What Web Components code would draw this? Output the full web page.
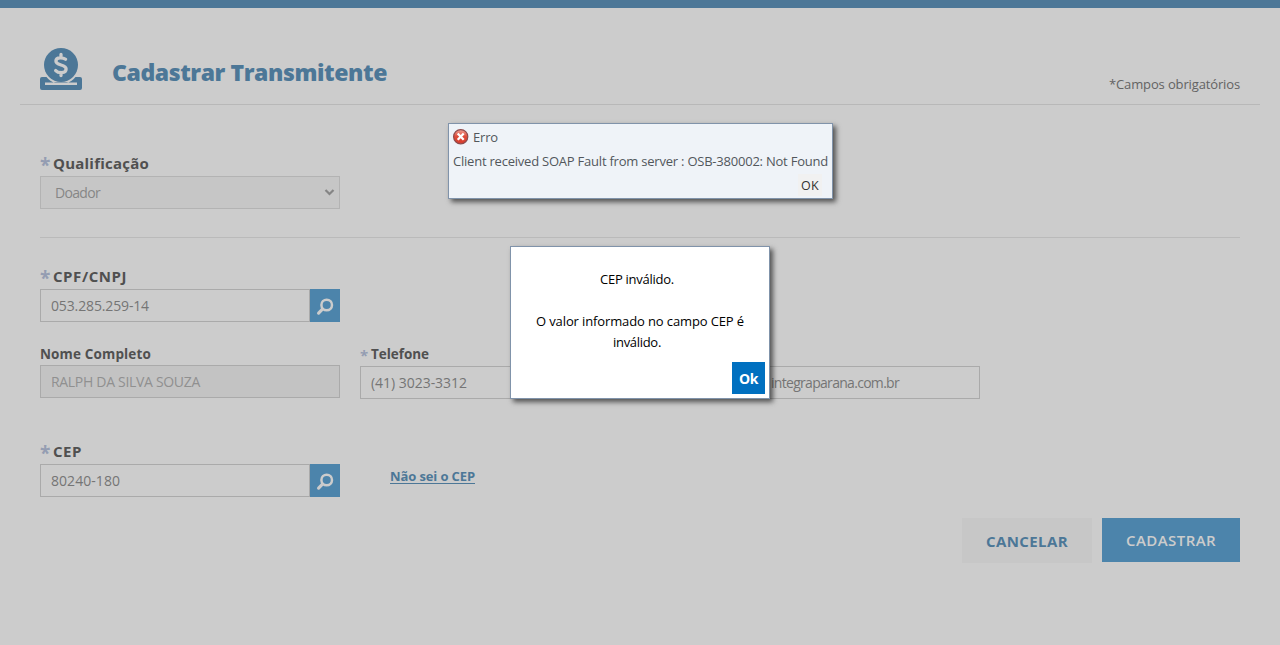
<!DOCTYPE html>
<html lang="pt-BR">
<head>
<meta charset="utf-8">
<title>Cadastrar Transmitente</title>
<style>
html,body{margin:0;height:645px;overflow:hidden;background:#ccc;font-family:"Open Sans","Noto Sans",sans-serif;color:#555}
</style>
</head>
<body>
<donor-page></donor-page>
<script>
const define=(name,html,setup)=>{
  const t=document.createElement('template');t.innerHTML=html;
  customElements.define(name,class extends HTMLElement{
    constructor(){super();this.attachShadow({mode:'open'}).append(t.content.cloneNode(true));}
    connectedCallback(){if(setup)setup(this,this.shadowRoot);}
  });
};

/* Single line of text tracked to a given width */
define('fit-text',`<style>:host{display:inline-block;white-space:pre}span{display:inline-block}</style><span><slot></slot></span>`,(el,root)=>{
  const s=root.querySelector('span'),w=+el.getAttribute('w');
  s.style.letterSpacing='0';
  const n=el.textContent.length,gap=(w-s.getBoundingClientRect().width)/n;
  s.style.letterSpacing=gap+'px';
});

define('donation-icon',`<style>:host{display:block;width:42px;height:42px}svg{display:block}</style>
<svg width="42" height="42" viewBox="0 0 42 42"><path fill="#4c7797" fill-rule="evenodd" d="M2 29h4.500Q10 33.500 15 35h12Q32 33.500 35.500 29H40q2 0 2 2v9q0 2-2 2H2q-2 0-2-2v-9q0-2 2-2zM5 34.600v2.400h32v-2.400z"/><circle cx="21" cy="17" r="17" fill="#4c7797"/><path fill="none" stroke="#ccc" stroke-width="3.300" stroke-linecap="round" stroke-linejoin="round" d="M21 6.500v3M21 24.500v3M25.600 11.300C23.500 9.600 16 8.400 15.900 13c0 5 10.200 3 10.200 8 0 4.900-7.900 4.400-10.400 1.600"/></svg>`);

define('search-button',`<style>:host{display:flex;width:30px;height:33px;background:#4c84ab;flex:none}svg{display:block}</style>
<svg width="30" height="33" viewBox="0 0 30 33"><circle cx="16.700" cy="16" r="5.300" fill="none" stroke="#ccc" stroke-width="2.500"/><path d="M12.500 20.200L8.600 24.100" stroke="#ccc" stroke-width="3.200" stroke-linecap="round"/></svg>`);

define('error-icon',`<style>:host{display:block;width:16px;height:16px}svg{display:block}</style>
<svg width="16" height="16" viewBox="0 0 16 16"><defs><linearGradient id="g" x2="0" y2="1"><stop stop-color="#f0a195"/><stop offset=".5" stop-color="#df4a38"/><stop offset="1" stop-color="#d73c2c"/></linearGradient></defs><circle cx="7.700" cy="7.700" r="7.100" fill="url(#g)" stroke="#8e4a4b" stroke-width="1.200"/><path d="M4.700 4.500l6 6.200M10.700 4.500l-6 6.200" stroke="#fff" stroke-width="2.300"/></svg>`);

define('required-mark',`<style>:host{display:block}svg{display:block}</style><svg width="9" height="22" viewBox="0 0 9 22"><path d="M4.500 7.500V11M.9 10l3.600 1 3.600-1M2.300 14.500L4.500 11l2.200 3.500" fill="none" stroke="#949db2" stroke-width="2"/></svg>`);

define('form-field',`<style>
:host{display:block;width:300px}
.label{height:24px;line-height:var(--lh,22px);display:flex;font-weight:700;font-size:var(--ls,15px);color:#505050}
.star{width:var(--star,13px);font-size:var(--star-size,19px);color:#949db2;display:none;flex:none;padding-top:var(--star-y,2px);box-sizing:border-box}
:host([required]) .star{display:block}
.row{display:flex}
.box{box-sizing:border-box;height:33px;flex:1;border:1px solid #aaa;padding-left:var(--pad,10px);font-size:14px;line-height:31px;color:#757575;display:flex}
:host([disabled]) .box{background:#c3c3c3;color:#909090}
:host([kind=select]) .box{background:#c6c6c6;border-color:#b3b3b3;color:#868686;line-height:32px}
</style><div class="label"><span class="star">*</span><slot name="label"></slot></div><div class="row"><div class="box"><slot></slot></div><slot name="button"></slot></div>`);

define('select-arrow',`<style>:host{display:block;margin-left:auto;padding:11px 4px 0 0;line-height:0}</style><svg width="11" height="9" viewBox="0 0 11 9"><path d="M1.500 2l4 4 4-4" fill="none" stroke="#858585" stroke-width="2.200"/></svg>`);

define('error-dialog',`<style>
:host{box-sizing:border-box;position:absolute;left:448px;top:123px;width:385px;height:76px;border:1px solid #8093aa;background:#eff3f8;box-shadow:3px 3px 5px rgba(0,0,0,.6);font-size:13px;color:#52575c}
.head{display:flex;height:26px;line-height:26px;padding-left:4px;gap:4px}
error-icon{margin-top:5px}
.msg{padding-left:4px;height:22px;line-height:22px}
.foot{display:flex;justify-content:flex-end;padding:2px 10px 0 0}
.ok{height:22px;line-height:23px;width:24px;background:#f1f1f1;color:#333;text-align:center;font-size:12.500px}
</style><div class="head"><error-icon></error-icon><fit-text w="25">Erro</fit-text></div>
<div class="msg"><fit-text w="375">Client received SOAP Fault from server : OSB-380002: Not Found</fit-text></div>
<div class="foot"><div class="ok"><fit-text w="18">OK</fit-text></div></div>`);

define('cep-dialog',`<style>
:host{box-sizing:border-box;position:absolute;left:510px;top:246px;width:260px;height:153px;border:1px solid #8093aa;background:#fff;box-shadow:3px 3px 5px rgba(0,0,0,.6);font-size:13px;line-height:21px;color:#000;padding-top:22px;text-align:center}
.p{height:21px}.gap{margin-bottom:21px}.l{padding-right:6px}
.foot{display:flex;justify-content:flex-end;padding:9px 4px 0}
.ok{width:33px;height:32px;line-height:33px;background:#0070c0;color:#fff;font-weight:700;font-size:14px}
</style><div class="p gap l"><fit-text w="74">CEP inválido.</fit-text></div>
<div class="p"><fit-text w="208">O valor informado no campo CEP é</fit-text></div><div class="p l"><fit-text w="48">inválido.</fit-text></div>
<div class="foot"><div class="ok"><fit-text w="19">Ok</fit-text></div></div>`);

define('donor-page',`<style>
:host{display:block;position:relative;width:1280px;height:645px;overflow:hidden;background:#ccc}
.bar{height:8px;background:#4c7797}
header{box-sizing:border-box;margin:0 20px;height:97px;border-bottom:1px solid #b8b8b8;padding:40px 20px 0;display:flex}
h1{margin:7px 0 0 30px;font-size:23px;line-height:34px;font-weight:800;color:#4c7797}
.req{margin:25px 0 0 auto;font-size:13px;line-height:22px;color:#636363}
main{padding:0 40px}
.q{padding-top:47px;height:85px;border-bottom:1px solid #bababa}
.cpf{padding-top:27px;height:57px}
.trio{display:flex;gap:20px;padding-top:19px;height:80px}
.trio form-field{--lh:26px;--ls:13.500px;--star:11px;--star-size:15px;--star-y:1px}
.trio form-field+form-field{--lh:24px;padding-top:1px}
.cep{display:flex;gap:50px;margin-top:19px}
.link{margin-top:26px;font-size:13px;line-height:20px;font-weight:700;color:#4c7797;height:17px;border-bottom:1px solid #4c7797}
.actions{display:flex;justify-content:flex-end;gap:10px;margin-top:21px;font-size:15px}
.btn{height:44px;line-height:45px;text-align:center;font-weight:600}
.cancel{width:130px;height:45px;line-height:47px;background:#c7c7c7;color:#4c7797;font-weight:700}
.save{width:138px;background:#4c84ab;color:#ccc}
</style>
<div class="bar"></div>
<header><donation-icon></donation-icon><h1><fit-text w="275">Cadastrar Transmitente</fit-text></h1><div class="req"><fit-text w="131">*Campos obrigatórios</fit-text></div></header>
<main>
<div class="q"><form-field required kind="select" style="--pad:14px"><fit-text slot="label" w="96">Qualificação</fit-text><fit-text w="45">Doador</fit-text><select-arrow></select-arrow></form-field></div>
<div class="cpf"><form-field required><fit-text slot="label" w="74">CPF/CNPJ</fit-text><fit-text w="98">053.285.259-14</fit-text><search-button slot="button"></search-button></form-field></div>
<div class="trio">
<form-field disabled><fit-text slot="label" w="111">Nome Completo</fit-text><fit-text w="149">RALPH DA SILVA SOUZA</fit-text></form-field>
<form-field required><fit-text slot="label" w="58">Telefone</fit-text><fit-text w="96">(41) 3023-3312</fit-text></form-field>
<form-field style="--pad:90px"><fit-text w="128">integraparana.com.br</fit-text></form-field>
</div>
<div class="cep"><form-field required><fit-text slot="label" w="29">CEP</fit-text><fit-text w="69">80240-180</fit-text><search-button slot="button"></search-button></form-field><div class="link"><fit-text w="85">Não sei o CEP</fit-text></div></div>
<div class="actions"><div class="btn cancel"><fit-text w="82">CANCELAR</fit-text></div><div class="btn save"><fit-text w="90">CADASTRAR</fit-text></div></div>
</main>
<error-dialog></error-dialog><cep-dialog></cep-dialog>`);
</script>
</body>
</html>
